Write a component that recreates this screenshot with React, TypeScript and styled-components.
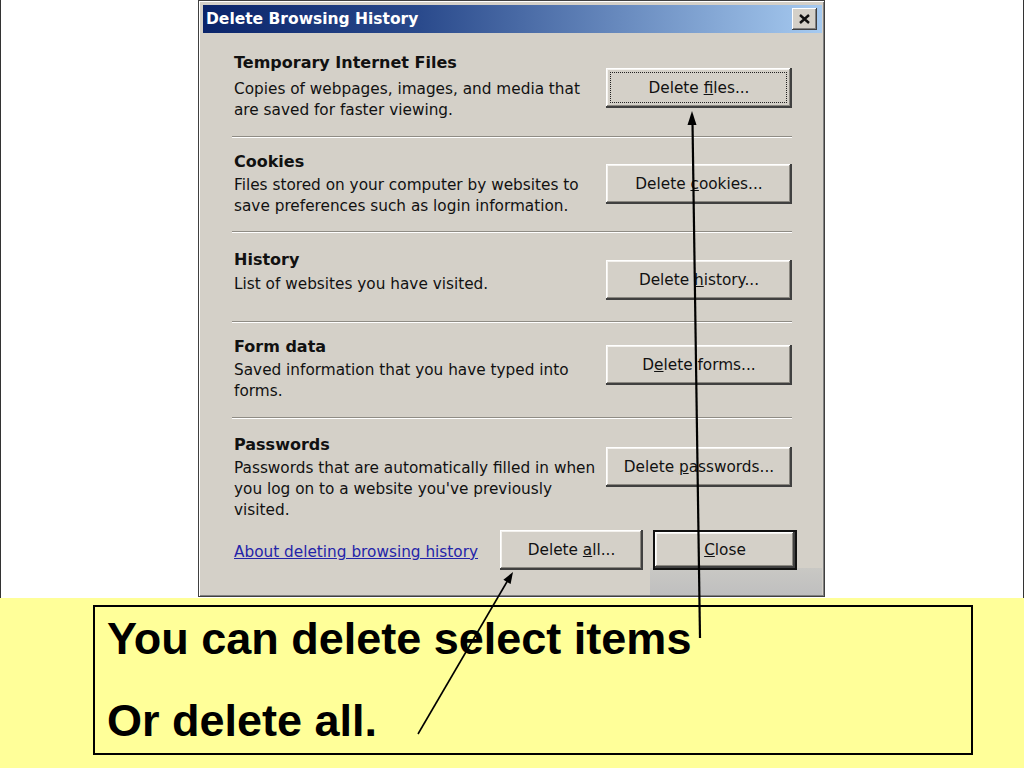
import * as React from 'react';
import styled, { createGlobalStyle } from 'styled-components';

const GlobalStyle = createGlobalStyle`
  html, body {
    margin: 0;
    padding: 0;
    background: #ffffff;
  }
  body {
    font-family: "DejaVu Sans", Verdana, sans-serif;
    color: #111;
  }
`;

const Slide = styled.div`
  position: relative;
  width: 1024px;
  height: 768px;
  overflow: hidden;
  display: flex;
  flex-direction: column;
`;

const Stage = styled.div`
  height: 598px;
  box-sizing: border-box;
  background: #ffffff;
  border-left: 1px solid #333;
  border-right: 1px solid #333;
  padding-left: 197px;
  display: flex;
  align-items: flex-start;
`;

const Dialog = styled.div`
  position: relative;
  width: 627px;
  height: 597px;
  box-sizing: border-box;
  background: #d4d0c8;
  border: 1px solid #404040;
  box-shadow: inset 1px 1px #ffffff, inset -1px -1px #808080;
  padding: 4px 2px 0 4px;
  display: flex;
  flex-direction: column;
`;

const TitleBar = styled.div`
  height: 28px;
  flex: none;
  display: flex;
  align-items: center;
  justify-content: space-between;
  padding: 0 5px 0 3px;
  background: linear-gradient(90deg, #0a246a 0%, #2a4a8c 35%, #a6caf0 100%);
`;

const TitleText = styled.span`
  color: #ffffff;
  font-weight: bold;
  font-size: 15.5px;
`;

const CloseBox = styled.button`
  width: 25px;
  height: 22px;
  padding: 0;
  border: none;
  background: #d4d0c8;
  box-shadow: inset -1px -1px #404040, inset 1px 1px #ffffff, inset -2px -2px #808080;
  display: flex;
  align-items: center;
  justify-content: center;
`;

const Content = styled.div`
  flex: 1;
  display: flex;
  flex-direction: column;
  padding: 4px 30px 0 29px;
`;

const Section = styled.div<{ $height: number; $last?: boolean }>`
  height: ${p => p.$height}px;
  box-sizing: border-box;
  display: grid;
  grid-template-columns: 1fr 186px;
  align-items: start;
  ${p => (p.$last ? '' : 'border-bottom: 1px solid #8f8c85; box-shadow: 0 1px 0 #ffffff;')}
`;

const TextBlock = styled.div<{ $top: number }>`
  margin-top: ${p => p.$top}px;
  padding-left: 2px;
`;

const Heading = styled.div`
  font-weight: bold;
  font-size: 16px;
  line-height: 20px;
`;

const Desc = styled.div<{ $gap: number }>`
  margin-top: ${p => p.$gap}px;
  font-size: 15.3px;
  line-height: 21px;
  white-space: nowrap;
`;

const WinButton = styled.button<{ $width?: number; $top?: number; $focused?: boolean; $default?: boolean }>`
  position: relative;
  z-index: 1;
  width: ${p => p.$width ?? 186}px;
  height: 40px;
  margin-top: ${p => p.$top ?? 0}px;
  justify-self: end;
  padding: 0;
  background: #d4d0c8;
  font-family: "DejaVu Sans", Verdana, sans-serif;
  font-size: 15.3px;
  color: #111;
  border: ${p => (p.$default ? '2px solid #111' : 'none')};
  box-sizing: border-box;
  box-shadow: inset -2px -2px #404040, inset 1px 1px #ffffff, inset -3px -3px #8a8780, inset 2px 2px #f4f2ee;

  ${p =>
    p.$focused
      ? `
    &::after {
      content: '';
      position: absolute;
      inset: 4px 5px 5px 4px;
      border: 1px dotted #222;
    }
  `
      : ''}
`;

const Footer = styled.div`
  flex: 1;
  display: flex;
  align-items: flex-start;
  padding-top: 8px;
`;

const HelpLink = styled.a`
  margin-top: 12px;
  margin-left: 2px;
  font-size: 15.3px;
  line-height: 20px;
  color: #2424a8;
  text-decoration: underline;
`;

const FooterButtons = styled.div`
  margin-left: auto;
  margin-right: -5px;
  display: flex;
  gap: 10px;
`;

const Smudge = styled.div`
  position: absolute;
  right: 2px;
  bottom: 1px;
  width: 172px;
  height: 27px;
  background: linear-gradient(180deg, #c9c8c4 0%, #bfbfbf 100%);
`;

const Caption = styled.div`
  flex: 1;
  background: #ffff99;
  padding: 7px 0 0 93px;
`;

const CaptionBox = styled.div`
  width: 880px;
  height: 150px;
  box-sizing: border-box;
  border: 2px solid #000;
  padding: 6px 0 0 12px;
  display: flex;
  flex-direction: column;
  gap: 30px;
`;

const CaptionLine = styled.div`
  font-family: "Liberation Sans", Arial, sans-serif;
  font-weight: bold;
  font-size: 45px;
  line-height: 52px;
  color: #000;
  white-space: nowrap;
`;

const Arrows = styled.svg`
  position: absolute;
  top: 0;
  left: 0;
  pointer-events: none;
  z-index: 5;
`;

type Item = {
  title: string;
  lines: string[];
  height: number;
  textTop: number;
  descGap: number;
  buttonTop: number;
  label: React.ReactNode;
  focused?: boolean;
};

const items: Item[] = [
  {
    title: 'Temporary Internet Files',
    lines: ['Copies of webpages, images, and media that', 'are saved for faster viewing.'],
    height: 100,
    textTop: 16,
    descGap: 6,
    buttonTop: 31,
    label: <>Delete <u>f</u>iles...</>,
    focused: true,
  },
  {
    title: 'Cookies',
    lines: ['Files stored on your computer by websites to', 'save preferences such as login information.'],
    height: 95,
    textTop: 15,
    descGap: 3,
    buttonTop: 27,
    label: <>Delete <u>c</u>ookies...</>,
  },
  {
    title: 'History',
    lines: ['List of websites you have visited.'],
    height: 90,
    textTop: 18,
    descGap: 4,
    buttonTop: 28,
    label: <>Delete <u>h</u>istory...</>,
  },
  {
    title: 'Form data',
    lines: ['Saved information that you have typed into', 'forms.'],
    height: 96,
    textTop: 15,
    descGap: 3,
    buttonTop: 23,
    label: <>D<u>e</u>lete forms...</>,
  },
  {
    title: 'Passwords',
    lines: [
      'Passwords that are automatically filled in when',
      "you log on to a website you've previously",
      'visited.',
    ],
    height: 104,
    textTop: 17,
    descGap: 3,
    buttonTop: 29,
    label: <>Delete <u>p</u>asswords...</>,
  },
];

const App: React.FC = () => {
  return (
    <Slide>
      <GlobalStyle />
      <Stage>
        <Dialog>
          <TitleBar>
            <TitleText>Delete Browsing History</TitleText>
            <CloseBox aria-label="Close">
              <svg width="11" height="10" viewBox="0 0 11 10">
                <path d="M1 1 L10 9 M10 1 L1 9" stroke="#111" strokeWidth="2.4" />
              </svg>
            </CloseBox>
          </TitleBar>
          <Content>
            {items.map((item, i) => (
              <Section key={item.title} $height={item.height} $last={i === items.length - 1}>
                <TextBlock $top={item.textTop}>
                  <Heading>{item.title}</Heading>
                  <Desc $gap={item.descGap}>
                    {item.lines.map((l, j) => (
                      <React.Fragment key={j}>
                        {j > 0 && <br />}
                        {l}
                      </React.Fragment>
                    ))}
                  </Desc>
                </TextBlock>
                <WinButton $top={item.buttonTop} $focused={item.focused}>
                  {item.label}
                </WinButton>
              </Section>
            ))}
            <Footer>
              <HelpLink href="#">About deleting browsing history</HelpLink>
              <FooterButtons>
                <WinButton $width={143}>Delete <u>a</u>ll...</WinButton>
                <WinButton $width={144} $default>
                  <u>C</u>lose
                </WinButton>
              </FooterButtons>
            </Footer>
          </Content>
          <Smudge />
        </Dialog>
      </Stage>
      <Caption>
        <CaptionBox>
          <CaptionLine>You can delete select items</CaptionLine>
          <CaptionLine>Or delete all.</CaptionLine>
        </CaptionBox>
      </Caption>
      <Arrows width="1024" height="768" viewBox="0 0 1024 768">
        <line x1="700" y1="638" x2="692.5" y2="122" stroke="#000" strokeWidth="2.2" />
        <polygon points="692,111 687.5,125 696.5,125" fill="#000" />
        <line x1="418" y1="734" x2="508" y2="580" stroke="#000" strokeWidth="1.6" />
        <polygon points="513,572 510.6,584 503.4,579.8" fill="#000" />
      </Arrows>
    </Slide>
  );
};

export default App;
